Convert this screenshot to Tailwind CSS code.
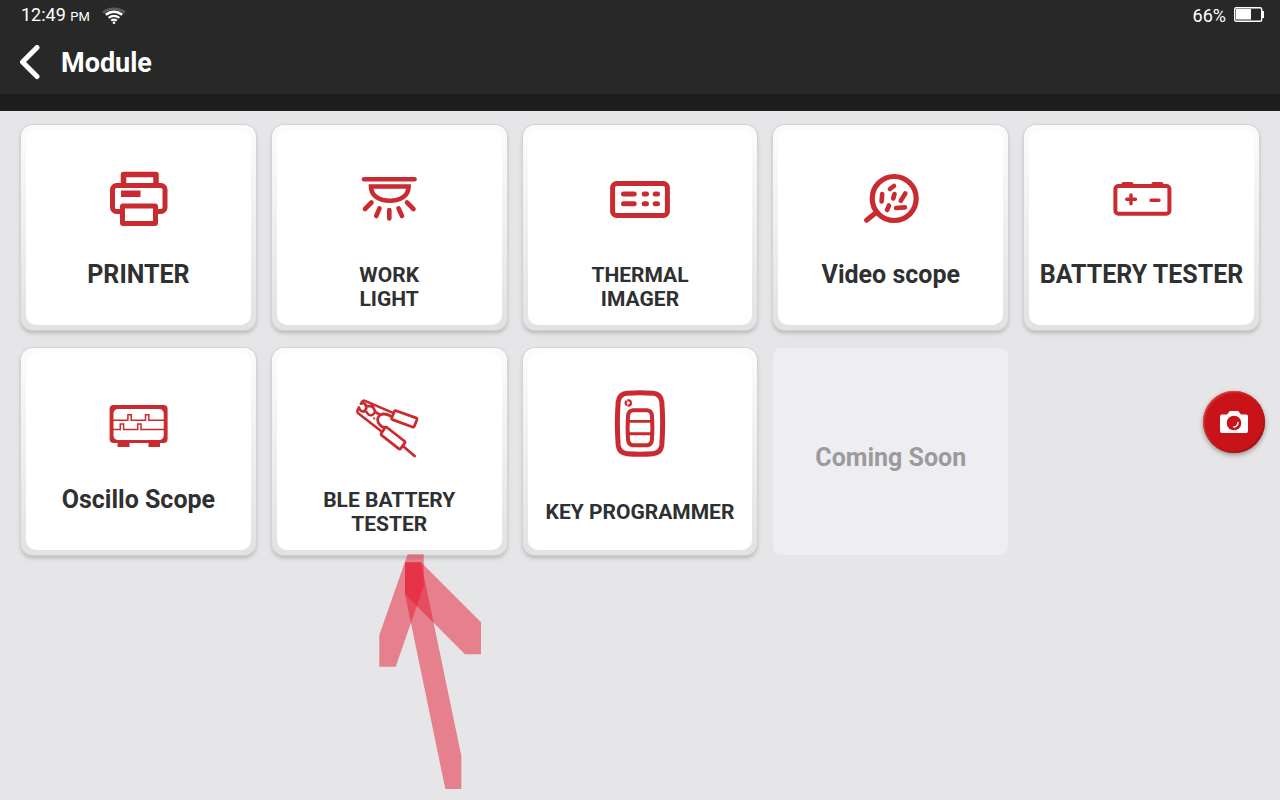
<!DOCTYPE html>
<html lang="en">
<head>
    <meta charset="UTF-8">
    <meta name="viewport" content="width=device-width, initial-scale=1.0">
    <title>Module</title>
    <script src="https://cdn.jsdelivr.net/npm/@tailwindcss/browser@4"></script>
</head>
<body class="min-h-screen bg-[#e6e6e8] font-[Roboto,sans-serif] text-[#2f3031]">
    <header class="bg-[#282828] text-white border-b-[17px] border-[#1d1d1d]">
        <!-- Status bar -->
        <div class="flex items-center justify-between h-8 pl-[21px] pr-4 text-lg leading-8">
            <div class="flex items-center">
                <span>12:49 <span class="text-[13px]">PM</span></span>
                <svg class="ml-3 w-6 h-[18px]" viewBox="0 0 24 18" fill="none" stroke="#fff" stroke-width="2.2">
                    <path d="M1 5.6C7.5 .6 16.500 .6 23 5.6" stroke="#5c5c5c" stroke-width="2.6"/>
                    <path d="M3.8 7.7C8.8 3.9 15.2 3.9 20.2 7.7" stroke-width="2.6"/>
                    <path d="M6.6 10.8C9.9 8.3 14.1 8.3 17.4 10.8"/>
                    <path d="M9.2 13.6C11 12.4 13 12.4 14.8 13.6"/>
                    <circle cx="12" cy="15.8" r="1.3" fill="#fff" stroke="none"/>
                </svg>
            </div>
            <div class="flex items-center gap-2">
                <span>66%</span>
                <svg class="w-[30px] h-4 mb-1" viewBox="0 0 30 16">
                    <rect x="0.7" y="1.7" width="27" height="13.6" rx="1.5" fill="none" stroke="#fff" stroke-width="1.4"/>
                    <path d="M2 3h15v10.500H2zM28 5h2v7h-2z" fill="#fff"/>
                </svg>
            </div>
        </div>
        <div class="flex items-center h-[62px] pl-[18px]">
            <button type="button" aria-label="Back" class="mr-[19px]">
                <svg class="w-6 h-9" viewBox="0 0 24 36" fill="none" stroke="#fff" stroke-width="5" stroke-linecap="round" stroke-linejoin="round">
                    <path d="M19 2.5 4.5 17 19 31.5"/>
                </svg>
            </button>
            <h1 class="text-[27px] leading-8 font-bold">Module</h1>
        </div>
    </header>

    <main class="grid grid-cols-5 grid-rows-[205px_207px] gap-x-4 gap-y-[18px] px-[21px] pt-[14px]">
        <button type="button" class="flex rounded-xl p-[5px] bg-linear-to-b from-[#fcfcfc] via-[#efeff0] to-[#e2e2e2] shadow-[0_0_1px_1px_#d3d3d5,0_3px_4px_#b4b4b8]">
            <span class="flex flex-col items-center justify-end w-full h-full pb-[14px] rounded-[10px] bg-white">
                <svg class="size-[72px] mb-7" viewBox="0 0 72 72" fill="none" stroke="#c92b30" stroke-width="5">
                    <path d="M21.5 22V11.5h32.5V22" stroke-width="5.5" stroke-linejoin="round"/>
                    <rect x="10.5" y="22.5" width="52.5" height="26" rx="4"/>
                    <path d="M19 27.500h19.500V34H19z" fill="#c92b30" stroke="none"/>
                    <rect x="20.5" y="43" width="33" height="17.5" rx="0.5" fill="#fff" stroke-linejoin="round"/>
                </svg>
                <span class="h-12 text-[25px] leading-6 font-bold">PRINTER</span>
            </span>
        </button>

        <button type="button" class="flex rounded-xl p-[5px] bg-linear-to-b from-[#fcfcfc] via-[#efeff0] to-[#e2e2e2] shadow-[0_0_1px_1px_#d3d3d5,0_3px_4px_#b4b4b8]">
            <span class="flex flex-col items-center justify-end w-full h-full pb-[14px] rounded-[10px] bg-white">
                <svg class="size-[72px] mb-7" viewBox="0 0 72 72" fill="none" stroke="#c92b30" stroke-width="4.6" stroke-linecap="round">
                    <path d="M11 16.3h50.5"/>
                    <path d="M18 23.5H55.6C55.6 33 47 37.8 36.8 37.8S18 33 18 23.5z"/>
                    <path d="M18.5 39.5 12 46M26.5 45.3 23.2 53M36.3 47v8.5M45.5 45.3 49 53M54 39.5 60.5 46"/>
                </svg>
                <span class="h-12 text-[21px] leading-6 font-bold">WORK<br>LIGHT</span>
            </span>
        </button>

        <button type="button" class="flex rounded-xl p-[5px] bg-linear-to-b from-[#fcfcfc] via-[#efeff0] to-[#e2e2e2] shadow-[0_0_1px_1px_#d3d3d5,0_3px_4px_#b4b4b8]">
            <span class="flex flex-col items-center justify-end w-full h-full pb-[14px] rounded-[10px] bg-white">
                <svg class="size-[72px] mb-7" viewBox="0 0 72 72" fill="none" stroke="#c92b30" stroke-width="5" stroke-linecap="round">
                    <rect x="8.6" y="20.6" width="54.8" height="31.8" rx="4"/>
                    <path d="M19.5 31h10.7M40.2 31h2.3M51.2 31h2.3M19.5 40.8h10.7M40.2 40.8h2.3M51.2 40.8h2.3"/>
                </svg>
                <span class="h-12 text-[21px] leading-6 font-bold">THERMAL<br>IMAGER</span>
            </span>
        </button>

        <button type="button" class="flex rounded-xl p-[5px] bg-linear-to-b from-[#fcfcfc] via-[#efeff0] to-[#e2e2e2] shadow-[0_0_1px_1px_#d3d3d5,0_3px_4px_#b4b4b8]">
            <span class="flex flex-col items-center justify-end w-full h-full pb-[14px] rounded-[10px] bg-white">
                <svg class="size-[72px] mb-7" viewBox="0 0 72 72" fill="none" stroke="#c92b30" stroke-width="4.6" stroke-linecap="round">
                    <circle cx="39.2" cy="35.5" r="22" stroke-width="5.2"/>
                    <path d="M20.5 50 11.5 57.3" stroke-width="5"/>
                    <path d="M34.9 26 39 23M27.2 31 26.6 38.5M39.5 31 38.2 35.5M50.3 30.5 45.8 37.7M34 42.500 32 47M41 45 50 44.4"/>
                </svg>
                <span class="h-12 text-[25px] leading-6 font-bold">Video scope</span>
            </span>
        </button>

        <button type="button" class="flex rounded-xl p-[5px] bg-linear-to-b from-[#fcfcfc] via-[#efeff0] to-[#e2e2e2] shadow-[0_0_1px_1px_#d3d3d5,0_3px_4px_#b4b4b8]">
            <span class="flex flex-col items-center justify-end w-full h-full pb-[14px] rounded-[10px] bg-white">
                <svg class="size-[72px] mb-7" viewBox="0 0 72 72" fill="none" stroke="#c92b30" stroke-width="4" stroke-linecap="round">
                    <rect x="9.4" y="23" width="54" height="27.8" rx="3"/>
                    <path d="M15.4 22v-1q0-2 2-2h8q2 0 2 2v1zM45.4 22v-1q0-2 2-2h8q2 0 2 2v1z" fill="#c92b30" stroke="none"/>
                    <path d="M20.700 36.3h8.8M25 32v8.8M45 37.3h8" stroke-width="3.4"/>
                </svg>
                <span class="h-12 text-[25px] leading-6 font-bold whitespace-nowrap">BATTERY TESTER</span>
            </span>
        </button>

        <button type="button" class="flex rounded-xl p-[5px] bg-linear-to-b from-[#fcfcfc] via-[#efeff0] to-[#e2e2e2] shadow-[0_0_1px_1px_#d3d3d5,0_3px_4px_#b4b4b8]">
            <span class="flex flex-col items-center justify-end w-full h-full pb-[14px] rounded-[10px] bg-white">
                <svg class="size-[72px] mb-7" viewBox="0 0 72 72" fill="none" stroke="#c92b30">
                    <path fill="#c92b30" stroke="none" fill-rule="evenodd" d="M11.6 17h50a4 4 0 0 1 4 4v30a4 4 0 0 1-4 4H58v4H46.500v-4h-19v4h-12v-4h-3.900a4 4 0 0 1-4-4V21a4 4 0 0 1 4-4zM16 21a4.500 4.500 0 0 0-4.500 4.500v22A4.500 4.500 0 0 0 16 52h41.200a4.500 4.500 0 0 0 4.500-4.500v-22a4.500 4.500 0 0 0-4.500-4.500z"/>
                    <path stroke-width="1.5" d="M11 32.2h14.9V26.7h3.3v5.5h14.3V26.7h3.3v5.5H62M11 41.5h7.3V36h3.3v5.5h14.1V36h3.3v5.5H62"/>
                </svg>
                <span class="h-12 text-[25px] leading-6 font-bold">Oscillo Scope</span>
            </span>
        </button>

        <button type="button" class="relative flex rounded-xl p-[5px] bg-linear-to-b from-[#fcfcfc] via-[#efeff0] to-[#e2e2e2] shadow-[0_0_1px_1px_#d3d3d5,0_3px_4px_#b4b4b8]">
            <span class="flex flex-col items-center justify-end w-full h-full pb-[14px] rounded-[10px] bg-white">
                <svg class="size-[72px] mb-7" viewBox="0 0 72 72" fill="none" stroke="#c92b30" stroke-width="2.8" stroke-linecap="round" stroke-linejoin="round">
                    <path d="M43 22.7 63 29.9Q64.4 30.4 63.9 31.8L61.3 38.3Q60.8 39.5 59.5 39L39.6 31.6Q38.3 31 38.8 29.7L41.2 23.7Q41.7 22.3 43 22.7z"/>
                    <path d="M34 39.5 51.3 53Q52.5 54 51.6 55.2L47.9 60.3Q46.9 61.6 45.6 60.6L28.8 47.3Q27.6 46.3 28.5 45.1L31.8 40.1Q32.8 38.6 34 39.5z"/>
                    <path d="M50.5 58.5 61.6 68"/>
                    <path d="M40 24.8 12 12.8Q10.2 12.1 9.3 13.5L7.8 15.8Q10.5 14.3 12.3 16.3 13.8 18.8 16.5 18.2 19.8 17.6 21.3 21.5 22.6 25.5 26.5 26" stroke-width="2.5"/>
                    <path d="M28.3 43.3 5.5 25.6Q3.8 24.2 4.6 22L6 19.3Q6.8 23.7 10.7 23.6 13 22.2 14.5 25.5 16.5 28.3 19.5 26.8 21.5 25.7 22 23.5M12.3 16.3 13.5 20.2 10.7 23.6" stroke-width="2.5"/>
                    <path d="M38 28.3Q31.5 24.5 27 27 23.5 30 25.2 34.3 27.5 39 32 39.5"/>
                    <path d="M21.1 30.4v.1" stroke-width="2.2"/>
                </svg>
                <span class="h-12 text-[21px] leading-6 font-bold">BLE BATTERY<br>TESTER</span>
            </span>
            <!-- Pointer to this module, hangs below the card -->
            <svg class="absolute z-10 left-[88px] top-[192px] w-[140px] h-[260px] pointer-events-none" viewBox="0 0 420 780" fill="#e51a2f" fill-opacity="0.5">
                <path d="M143 43h48v96L107 380H58V285z"/>
                <path d="M135 67h48L363 247v96h-48L135 163z"/>
                <path d="M135 67h48L304 648v99h-48L135 163z"/>
            </svg>
        </button>

        <button type="button" class="flex rounded-xl p-[5px] bg-linear-to-b from-[#fcfcfc] via-[#efeff0] to-[#e2e2e2] shadow-[0_0_1px_1px_#d3d3d5,0_3px_4px_#b4b4b8]">
            <span class="flex flex-col items-center justify-end w-full h-full pb-[14px] rounded-[10px] bg-white">
                <svg class="size-[72px] mb-7" viewBox="0 0 72 72" fill="none" stroke="#c92b30">
                    <path d="M23 5.2Q36 4.200 49 5.2 57 5.9 57.8 14 59.5 35 57.8 57 57 65 49 65.700 36 66.700 23 65.700 15 65 14.2 57 12.5 35 14.2 14 15 5.9 23 5.2z" stroke-width="5"/>
                    <path d="M29 22.2H43Q47.5 22.5 48 28 48.8 40 48 51.5 47.5 57 43 57.3H29Q24.5 57 24 51.5 23.2 40 24 28 24.5 22.5 29 22.2z" stroke-width="4"/>
                    <path d="M24 33.4h24M24 45.7h24" stroke-width="2.9"/>
                    <circle cx="24.3" cy="15" r="2.6" stroke-width="2.4" stroke-dasharray="4.8 0.64"/>
                </svg>
                <span class="flex items-center h-12 text-[21px] leading-6 font-bold whitespace-nowrap">KEY PROGRAMMER</span>
            </span>
        </button>

        <div class="flex items-center justify-center rounded-lg bg-[#eeeef0] pt-3 text-[25px] leading-6 font-bold text-[#9b9b9d] shadow-[0_0_2px_#e2e2e4]">Coming Soon</div>
    </main>

    <button type="button" aria-label="Take screenshot" class="fixed top-[391px] right-[15px] flex items-center justify-center size-[62px] rounded-full bg-[#c81418] shadow-[inset_1px_1px_2px_#e0474a,inset_-1px_-1px_2px_#9c1013,0_2px_5px_#8f8f92]">
        <svg class="w-7 h-6" viewBox="0 0 28 24">
            <path d="M2 4.5h5l2-2.600Q9.500 1 10.500 1h7q1 0 1.500.9L21 4.500h5q2 0 2 2v14.500q0 2-2 2H2q-2 0-2-2V6.500q0-2 2-2z" fill="#fff"/>
            <circle cx="14" cy="13" r="7.3" fill="#c81418"/>
            <path d="M18 12.5Q17.8 16.500 13.8 17" fill="none" stroke="#fff" stroke-width="1.5" stroke-linecap="round"/>
        </svg>
    </button>
</body>
</html>
